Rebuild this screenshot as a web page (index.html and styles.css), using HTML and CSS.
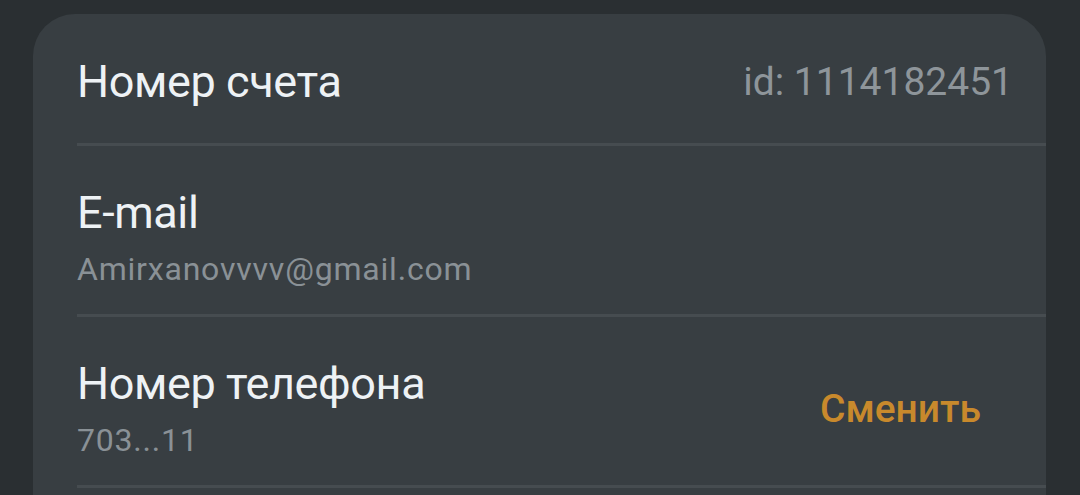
FILE: index.html
```html
<!DOCTYPE html>
<html lang="ru">
<head>
    <meta charset="UTF-8">
    <meta name="viewport" content="width=device-width, initial-scale=1.0">
    <title>Аккаунт</title>
    <link rel="stylesheet" href="styles.css">
</head>
<body>
    <!-- Account details card -->
    <div class="card">
        <div class="row row-single">
            <div class="row-text">
                <div class="row-title">Номер счета</div>
            </div>
            <div class="row-value">id: 1114182451</div>
        </div>

        <div class="row">
            <div class="row-text">
                <div class="row-title">E-mail</div>
                <div class="row-sub">Amirxanovvvv@gmail.com</div>
            </div>
        </div>

        <div class="row">
            <div class="row-text">
                <div class="row-title">Номер телефона</div>
                <div class="row-sub">703...11</div>
            </div>
            <a href="#" class="row-action">Сменить</a>
        </div>
    </div>
</body>
</html>
```

FILE: styles.css
```css
body, html {
    margin: 0;
    height: 100%;
    overflow: hidden;
    background-color: #2a2f32;
    font-family: Roboto, "Noto Sans", sans-serif;
}

body {
    padding: 14px 34px 0 33px;
    box-sizing: border-box;
}

/* Card with rounded top corners */
.card {
    background-color: #383e42;
    border-radius: 42px 42px 0 0;
    padding-left: 44px;
    min-height: 600px;
}

/* Each setting row, divider runs to the card's right edge */
.row {
    display: flex;
    align-items: center;
    justify-content: space-between;
    padding: 40px 0 25px 0;
    border-bottom: 3px solid #464c50;
}

.row-single {
    padding: 41px 0 34px 0;
}

.row-title {
    font-size: 45px;
    line-height: 54px;
    letter-spacing: -0.4px;
    color: #eef2f5;
}

.row-sub {
    margin-top: 9px;
    font-size: 32px;
    line-height: 40px;
    letter-spacing: 0.8px;
    color: #8a9196;
}

.row-value {
    margin-right: 33px;
    font-size: 39px;
    color: #8e959a;
}

.row-action {
    margin-right: 65px;
    font-size: 39px;
    font-weight: 500;
    color: #c8892c;
    text-decoration: none;
}
```
